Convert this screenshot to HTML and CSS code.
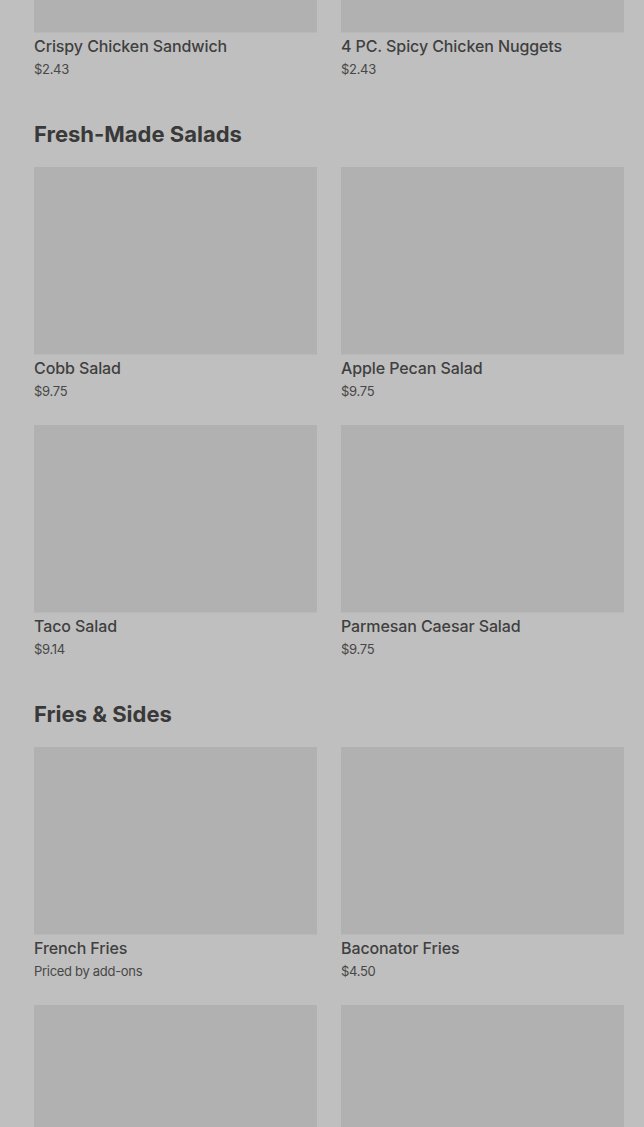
FILE: index.html
```html
<!DOCTYPE html>
<html lang="en">
<head>
    <meta charset="UTF-8">
    <meta name="viewport" content="width=device-width, initial-scale=1.0">
    <title>Menu</title>
    <link rel="stylesheet" href="styles.css">
</head>
<body>
    <div class="menu">
        <section class="menu-section">
            <div class="item-grid">
                <div class="item">
                    <div class="item-image"></div>
                    <div class="item-name">Crispy Chicken Sandwich</div>
                    <div class="item-price">$2.43</div>
                </div>
                <div class="item">
                    <div class="item-image"></div>
                    <div class="item-name">4 PC. Spicy Chicken Nuggets</div>
                    <div class="item-price">$2.43</div>
                </div>
            </div>
        </section>

        <section class="menu-section">
            <h2>Fresh-Made Salads</h2>
            <div class="item-grid">
                <div class="item">
                    <div class="item-image"></div>
                    <div class="item-name">Cobb Salad</div>
                    <div class="item-price">$9.75</div>
                </div>
                <div class="item">
                    <div class="item-image"></div>
                    <div class="item-name">Apple Pecan Salad</div>
                    <div class="item-price">$9.75</div>
                </div>
                <div class="item">
                    <div class="item-image"></div>
                    <div class="item-name">Taco Salad</div>
                    <div class="item-price">$9.14</div>
                </div>
                <div class="item">
                    <div class="item-image"></div>
                    <div class="item-name">Parmesan Caesar Salad</div>
                    <div class="item-price">$9.75</div>
                </div>
            </div>
        </section>

        <section class="menu-section">
            <h2>Fries &amp; Sides</h2>
            <div class="item-grid">
                <div class="item">
                    <div class="item-image"></div>
                    <div class="item-name">French Fries</div>
                    <div class="item-price">Priced by add-ons</div>
                </div>
                <div class="item">
                    <div class="item-image"></div>
                    <div class="item-name">Baconator Fries</div>
                    <div class="item-price">$4.50</div>
                </div>
                <div class="item">
                    <div class="item-image"></div>
                </div>
                <div class="item">
                    <div class="item-image"></div>
                </div>
            </div>
        </section>
    </div>
</body>
</html>
```

FILE: styles.css
```css
html, body {
    margin: 0;
    background-color: #bfbfbf;
}
body {
    font-family: Inter, "Noto Sans", Arial, sans-serif;
    color: #3d3d3d;
    overflow: hidden;
    height: 1127px;
}
.menu {
    margin-top: -155px;
    padding: 0 20px 0 34px;
}
.menu-section {
    margin-bottom: 42px;
}
.menu-section h2 {
    margin: 0 0 19px 0;
    font-size: 22px;
    line-height: 28px;
    font-weight: 700;
    color: #393939;
}
.item-grid {
    display: grid;
    grid-template-columns: 1fr 1fr;
    column-gap: 24px;
    row-gap: 25px;
}
.item-image {
    height: 187px;
    background-color: #b1b1b1;
    border-bottom: 1px solid #b8b8b8;
}
.item-name {
    margin-top: 3px;
    font-size: 16px;
    line-height: 20px;
    font-weight: 500;
    letter-spacing: -0.1px;
    color: #3f3f3f;
}
.item-price {
    margin-top: 4px;
    font-size: 13px;
    line-height: 18px;
    letter-spacing: -0.3px;
    color: #474747;
}
```
